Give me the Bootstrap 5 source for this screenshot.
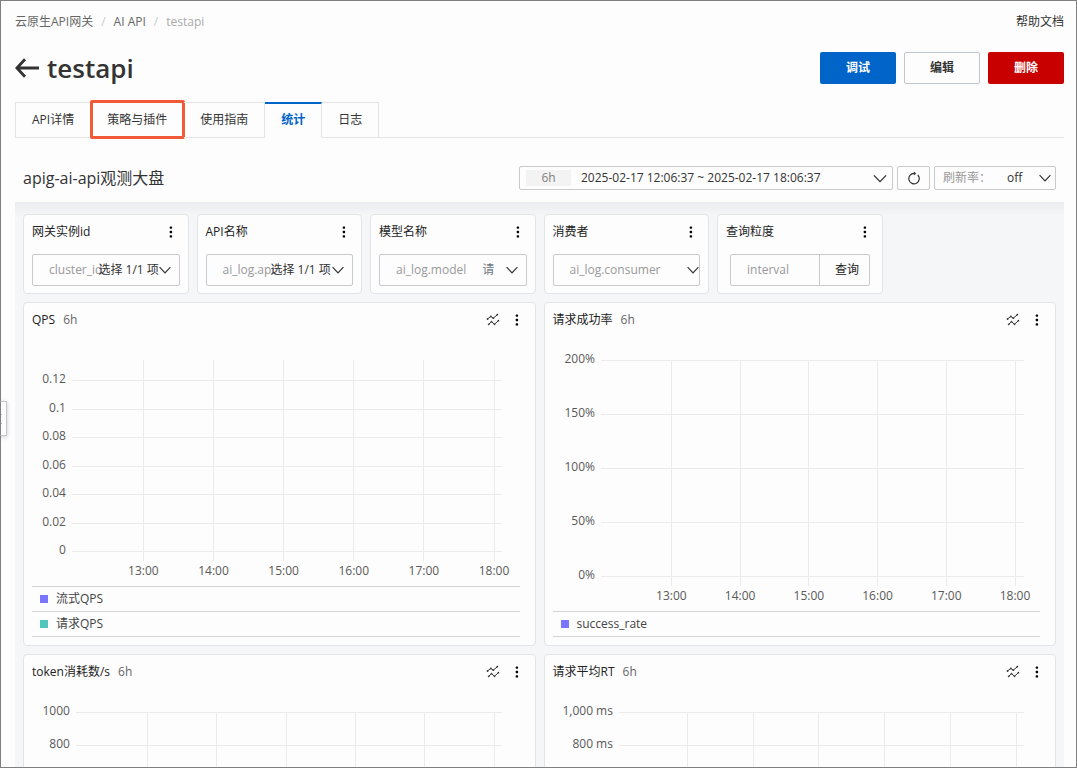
<!DOCTYPE html>
<html lang="zh-CN">
<head>
<meta charset="utf-8">
<meta name="viewport" content="width=device-width, initial-scale=1">
<title>testapi - 云原生API网关</title>
<link href="https://cdn.jsdelivr.net/npm/bootstrap@5.3.0/dist/css/bootstrap.min.css" rel="stylesheet">
<style>
  :root { --line: #e3e4e6; --ink: #333; --brand: #0064c8; }
  body { font: 12px/18px "Open Sans", "Noto Sans CJK SC", sans-serif; color: var(--ink); background: #fdfdfd; border: 1px solid #808080; }
  a { color: inherit; text-decoration: none; }
  .page-main { padding: 12px 12px 0 14px; }
  .crumbs { --bs-breadcrumb-divider-color: #ccc; --bs-breadcrumb-item-padding-x: 8px; --bs-breadcrumb-item-active-color: #aaa; color: #666; }
  .page-title { font-size: 26px; line-height: 34px; font-weight: 600; }
  .act { width: 76px; height: 32px; font-size: 12px; font-weight: 700; border-radius: 2px; padding: 0; }
  .act-main { background: var(--brand); color: #fff; }
  .act-edit { border: 1px solid #c0c6cc; color: var(--ink); }
  .act-del { background: #c80000; color: #fff; }
  .page-tabs { margin-top: 17px; border-color: var(--line); }
  .page-tabs .nav-item { position: relative; }
  .page-tabs .nav-link { height: 36px; padding: 8px 16px; color: var(--ink); border: 1px solid var(--line); border-left-width: 0; border-radius: 0; margin-bottom: -1px; }
  .page-tabs .nav-item:first-child .nav-link { border-left-width: 1px; }
  .page-tabs .nav-link.active { color: var(--brand); font-weight: 700; background: #fdfdfd; border-top: 2px solid var(--brand); border-bottom-color: #fdfdfd; padding-top: 7px; }
  .callout-box { position: absolute; inset: -2px -1px; border: 3px solid #f05a37; border-radius: 2px; pointer-events: none; }
  .board-head { padding: 28px 8px 12px; }
  .board-title { font-size: 16px; line-height: 24px; font-weight: 400; }
  .field { height: 24px; border: 1px solid #c8c9cb; border-radius: 2px; background: #fdfdfd; }
  .field select, .field input { appearance: none; border: 0; background: none; padding: 0; color: var(--ink); font: inherit; outline: 0; min-width: 0; }
  .range { width: 374px; padding: 0 5px 0 6px; }
  .range span { width: 45px; line-height: 16px; background: #f3f3f4; color: #808080; }
  .range select { font-weight: 500; margin-left: 10px; }
  .refresh { width: 33px; padding: 0; }
  .rate { width: 122px; padding: 0 4px 0 8px; }
  .rate label { color: #999; }
  .board { padding: 12px 8px; background: linear-gradient(#ebecef, #f5f6f8 14px); }
  .tile-grid { display: grid; grid-template-columns: repeat(6, minmax(0, 1fr)); gap: 8px; }
  .tile { background: #fdfdfd; border: 1px solid var(--line); border-radius: 4px; padding: 8px; }
  .filter-tile { height: 80px; }
  .filter-tile h2, .chart-tile h2 { font-size: 12px; line-height: 18px; font-weight: 400; margin: 0; color: #222; }
  .chart-tile { grid-column: span 3; padding-right: 15px; }
  .dots { border: 0; background: none; padding: 0; width: 18px; height: 18px; display: flex; align-items: center; justify-content: center; color: var(--ink); }
  .chart-tile .dots { margin-right: -6px; }
  .field-tall { height: 32px; margin-top: 13px; }
  .field-tall label { color: #999; padding-left: 16px; }
  .field-tall .picked { margin-left: -4px; }
  .field-tall input { color: #999; padding-left: 16px; }
  .field-tall input::placeholder { color: #999; opacity: 1; }
  .query { width: 50px; border: 0; border-left: 1px solid #c8c9cb; background: none; padding: 0 0 0 6px; color: #222; }
  .span-note { color: #666; margin-left: 8px; }
  .plot { display: block; width: 100%; margin-top: 7px; font-size: 12px; fill: #595959; overflow: hidden; }
  .plot line { stroke: #ebebec; shape-rendering: crispEdges; }
  .series li { height: 25px; border-bottom: 1px solid #d2d3d5; padding-left: 8px; color: #444; }
  .series { border-top: 1px solid #d2d3d5; }
  .swatch { width: 8px; height: 8px; margin-right: 8px; }
  .drawer-grip { position: absolute; left: 0; top: 401px; width: 7px; height: 35px; border: 1px solid #c4c7cc; border-left-color: #808080; background: #fdfdfd; box-shadow: 0 1px 4px #0003; padding: 0; display: flex; align-items: center; color: #bbb; }
</style>
</head>
<body class="vh-100 overflow-hidden">
<svg class="d-none">
  <symbol id="i-chev" viewBox="0 0 12 8"><path d="M.6 1.2 6 6.8l5.400-5.600" fill="none" stroke="currentColor" stroke-width="1.200"/></symbol>
  <symbol id="i-dots" viewBox="0 0 4 12"><rect x=".7" y=".4" width="2.400" height="2.400" rx=".7"/><rect x=".7" y="4.800" width="2.400" height="2.400" rx=".7"/><rect x=".7" y="9.200" width="2.400" height="2.400" rx=".7"/></symbol>
  <symbol id="i-trend" viewBox="0 0 14 14"><g fill="none" stroke="currentColor" stroke-width="1"><path d="M1.500 6 4.800 3.400l2.500 1.800L11.300 1.700M2.700 11.300l2.800-2.600 3 2.600 3.900-3.600"/></g><g fill="currentColor"><circle cx="1.600" cy="6" r=".9"/><circle cx="4.800" cy="3.400" r=".9"/><circle cx="7.300" cy="5.200" r=".9"/><circle cx="11.300" cy="1.700" r=".9"/><circle cx="2.700" cy="11.300" r=".9"/><circle cx="5.500" cy="8.700" r=".9"/><circle cx="8.500" cy="11.300" r=".9"/><circle cx="12.400" cy="7.700" r=".9"/></g></symbol>
</svg>

<main class="page-main h-100 overflow-hidden">
  <div class="d-flex justify-content-between">
    <nav aria-label="breadcrumb">
      <ol class="breadcrumb crumbs mb-0">
        <li class="breadcrumb-item"><a href="#">云原生API网关</a></li>
        <li class="breadcrumb-item"><a href="#">AI API</a></li>
        <li class="breadcrumb-item active" aria-current="page">testapi</li>
      </ol>
    </nav>
    <a href="#">帮助文档</a>
  </div>

  <header class="d-flex align-items-center justify-content-between mt-3 pt-1">
    <div class="d-flex align-items-center gap-2">
      <a href="#" aria-label="返回" class="d-flex"><svg width="24" height="20" viewBox="0 0 24 20" fill="none" stroke="currentColor" stroke-width="2.800"><path d="M24 10H2.500M10 1.200 1.900 10l8.100 8.800"/></svg></a>
      <h1 class="page-title mb-0">testapi</h1>
    </div>
    <div class="d-flex gap-2">
      <button type="button" class="btn act act-main">调试</button>
      <button type="button" class="btn act act-edit">编辑</button>
      <button type="button" class="btn act act-del">删除</button>
    </div>
  </header>

  <ul class="nav nav-tabs page-tabs">
    <li class="nav-item"><a class="nav-link" href="#">API详情</a></li>
    <li class="nav-item"><a class="nav-link" href="#">策略与插件</a><span class="callout-box"></span></li>
    <li class="nav-item"><a class="nav-link" href="#">使用指南</a></li>
    <li class="nav-item"><a class="nav-link active" aria-current="page" href="#">统计</a></li>
    <li class="nav-item"><a class="nav-link" href="#">日志</a></li>
  </ul>

  <div class="board-head d-flex align-items-center justify-content-between">
    <h2 class="board-title mb-0">apig-ai-api观测大盘</h2>
    <div class="d-flex gap-1">
      <div class="field range d-flex align-items-center">
        <span class="text-center">6h</span>
        <select class="flex-grow-1" aria-label="时间范围"><option>2025-02-17 12:06:37 ~ 2025-02-17 18:06:37</option></select>
        <svg width="14" height="9"><use href="#i-chev"/></svg>
      </div>
      <button type="button" class="field refresh d-flex align-items-center justify-content-center" aria-label="刷新">
        <svg width="14" height="14" viewBox="0 0 14 14" fill="none" stroke="#333" stroke-width="1.200"><path d="M10.800 4A5.200 5.200 0 1 1 7.200 2.400"/><path d="M6.800.400 9.200 2.400 6.800 4.400z" fill="#333" stroke="none"/></svg>
      </button>
      <div class="field rate d-flex align-items-center">
        <label for="rate">刷新率：</label>
        <select id="rate" class="flex-grow-1 ps-3"><option>off</option></select>
        <svg width="12" height="8"><use href="#i-chev"/></svg>
      </div>
    </div>
  </div>

  <section class="board">
    <div class="tile-grid">
      <div class="tile filter-tile">
        <div class="d-flex justify-content-between"><h2>网关实例id</h2><button type="button" class="dots" aria-label="更多"><svg width="4" height="12"><use href="#i-dots"/></svg></button></div>
        <div class="field field-tall d-flex align-items-center pe-2"><label for="f1">cluster_id</label><select id="f1" class="picked flex-grow-1"><option>选择 1/1 项</option></select><svg class="flex-shrink-0" width="12" height="8"><use href="#i-chev"/></svg></div>
      </div>
      <div class="tile filter-tile">
        <div class="d-flex justify-content-between"><h2>API名称</h2><button type="button" class="dots" aria-label="更多"><svg width="4" height="12"><use href="#i-dots"/></svg></button></div>
        <div class="field field-tall d-flex align-items-center pe-2"><label for="f2">ai_log.api</label><select id="f2" class="picked flex-grow-1"><option>选择 1/1 项</option></select><svg class="flex-shrink-0" width="12" height="8"><use href="#i-chev"/></svg></div>
      </div>
      <div class="tile filter-tile">
        <div class="d-flex justify-content-between"><h2>模型名称</h2><button type="button" class="dots" aria-label="更多"><svg width="4" height="12"><use href="#i-dots"/></svg></button></div>
        <div class="field field-tall d-flex align-items-center pe-2"><label for="f3">ai_log.model</label><select id="f3" class="flex-grow-1 ps-3 text-secondary"><option>请</option></select><svg class="flex-shrink-0" width="12" height="8"><use href="#i-chev"/></svg></div>
      </div>
      <div class="tile filter-tile">
        <div class="d-flex justify-content-between"><h2>消费者</h2><button type="button" class="dots" aria-label="更多"><svg width="4" height="12"><use href="#i-dots"/></svg></button></div>
        <div class="field field-tall d-flex align-items-center"><label for="f4">ai_log.consumer</label><select id="f4" class="flex-grow-1"><option></option></select><svg class="flex-shrink-0" width="12" height="8"><use href="#i-chev"/></svg></div>
      </div>
      <div class="tile filter-tile">
        <div class="d-flex justify-content-between"><h2>查询粒度</h2><button type="button" class="dots" aria-label="更多"><svg width="4" height="12"><use href="#i-dots"/></svg></button></div>
        <div class="field field-tall d-flex mx-1"><input class="flex-grow-1" type="text" placeholder="interval" aria-label="查询粒度"><button type="button" class="query flex-shrink-0">查询</button></div>
      </div>

      <article class="tile chart-tile" data-chart="qps"></article>
      <article class="tile chart-tile" data-chart="success"></article>
      <article class="tile chart-tile" data-chart="token"></article>
      <article class="tile chart-tile" data-chart="rt"></article>
    </div>
  </section>
</main>
<button type="button" class="drawer-grip" aria-label="展开"><svg width="2" height="12" viewBox="0 0 2 12" fill="currentColor"><rect y="1" width="1" height="1"/><rect y="10" width="1" height="1"/></svg></button>

<script src="https://cdn.jsdelivr.net/npm/bootstrap@5.3.0/dist/js/bootstrap.bundle.min.js"></script>
<script>
// Horizontal values are in a 488-unit space and drawn as percentages, so plots follow the card width.
const hours = ['13:00', '14:00', '15:00', '16:00', '17:00', '18:00'];
const charts = {
  qps: { title: 'QPS', height: 250, left: 40, right: 470, top: 24, first: 44, bottom: 215, x0: 111.5, x1: 462.5, hours,
    ticks: ['0.12', '0.1', '0.08', '0.06', '0.04', '0.02', '0'], series: [['#7a76ff', '流式QPS'], ['#50c5ba', '请求QPS']] },
  success: { title: '请求成功率', height: 275, left: 48, right: 471, top: 24, first: 24, bottom: 240, x0: 118.5, x1: 462.5, hours,
    ticks: ['200%', '150%', '100%', '50%', '0%'], series: [['#7a76ff', 'success_rate']] },
  token: { title: 'token消耗数/s', height: 90, left: 44, right: 470, top: 24, first: 24, bottom: 57, x0: 115.5, x1: 462.5,
    ticks: ['1000', '800'] },
  rt: { title: '请求平均RT', height: 90, left: 66, right: 471, top: 24, first: 24, bottom: 57, x0: 134.5, x1: 463.5,
    ticks: ['1,000 ms', '800 ms'] }
};
const pct = v => (v / 488 * 100).toFixed(3) + '%';
document.querySelectorAll('[data-chart]').forEach(el => {
  const c = charts[el.dataset.chart];
  const rows = c.ticks.map((t, i) => {
    const y = Math.round(c.first + (c.bottom - c.first) * i / (c.ticks.length - 1));
    return `<line x1="${pct(c.left)}" x2="${pct(c.right)}" y1="${y}" y2="${y}"/><text x="${pct(c.left - 6)}" y="${y + 3}" text-anchor="end">${t}</text>`;
  }).join('');
  const cols = hours.map((_, i) => {
    const x = pct(c.x0 + (c.x1 - c.x0) * i / (hours.length - 1));
    const label = c.hours ? `<text x="${x}" y="${c.bottom + 24}" text-anchor="middle">${c.hours[i]}</text>` : '';
    return `<line x1="${x}" x2="${x}" y1="${c.top}" y2="${c.hours ? c.bottom + 10 : c.height}"/>${label}`;
  }).join('');
  const legend = c.series ? `<ul class="series list-unstyled mb-0">${c.series.map(s => `<li class="d-flex align-items-center"><span class="swatch" style="background:${s[0]}"></span>${s[1]}</li>`).join('')}</ul>` : '';
  el.innerHTML = `<div class="d-flex align-items-center"><h2>${c.title}</h2><span class="span-note me-auto">6h</span>
    <svg width="14" height="14" class="me-2"><use href="#i-trend"/></svg>
    <button type="button" class="dots" aria-label="更多"><svg width="4" height="12"><use href="#i-dots"/></svg></button></div>
    <svg class="plot" height="${c.height}">${rows}${cols}</svg>${legend}`;
});
</script>
</body>
</html>
